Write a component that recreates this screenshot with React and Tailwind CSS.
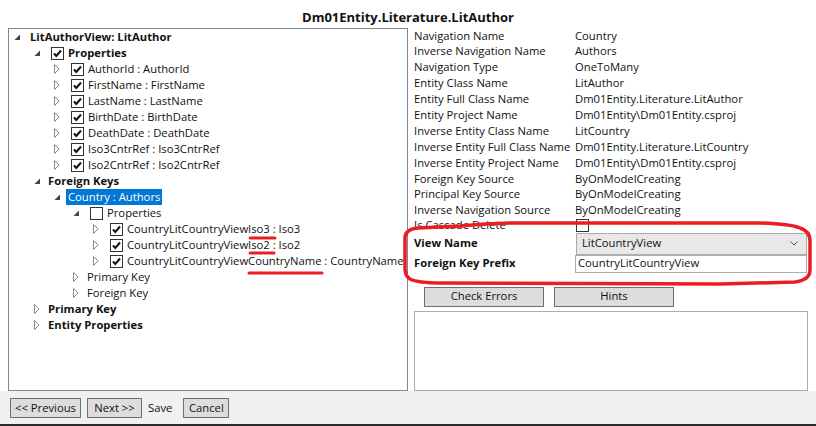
import React from 'react';

const FONT = { fontFamily: '"Open Sans", "Noto Sans", sans-serif' };

const PAD = ['pl-[3px]', 'pl-[23px]', 'pl-[43px]', 'pl-[62px]', 'pl-[82px]'];

const treeRows = [
  { level: 0, open: true, text: 'LitAuthorView: LitAuthor', bold: true },
  { level: 1, open: true, check: true, text: 'Properties', bold: true },
  { level: 2, check: true, text: 'AuthorId : AuthorId' },
  { level: 2, check: true, text: 'FirstName : FirstName' },
  { level: 2, check: true, text: 'LastName : LastName' },
  { level: 2, check: true, text: 'BirthDate : BirthDate' },
  { level: 2, check: true, text: 'DeathDate : DeathDate' },
  { level: 2, check: true, text: 'Iso3CntrRef : Iso3CntrRef' },
  { level: 2, check: true, text: 'Iso2CntrRef : Iso2CntrRef' },
  { level: 1, open: true, text: 'Foreign Keys', bold: true },
  { level: 2, open: true, text: 'Country : Authors', selected: true },
  { level: 3, open: true, check: false, text: 'Properties' },
  { level: 4, check: true, text: 'CountryLitCountryViewIso3 : Iso3' },
  { level: 4, check: true, text: 'CountryLitCountryViewIso2 : Iso2' },
  { level: 4, check: true, text: 'CountryLitCountryViewCountryName : CountryName' },
  { level: 3, text: 'Primary Key' },
  { level: 3, text: 'Foreign Key' },
  { level: 1, text: 'Primary Key', bold: true },
  { level: 1, text: 'Entity Properties', bold: true },
];

const props = [
  ['Navigation Name', 'Country'],
  ['Inverse Navigation Name', 'Authors'],
  ['Navigation Type', 'OneToMany'],
  ['Entity Class Name', 'LitAuthor'],
  ['Entity Full Class Name', 'Dm01Entity.Literature.LitAuthor'],
  ['Entity Project Name', 'Dm01Entity\\Dm01Entity.csproj'],
  ['Inverse Entity Class Name', 'LitCountry'],
  ['Inverse Entity Full Class Name', 'Dm01Entity.Literature.LitCountry'],
  ['Inverse Entity Project Name', 'Dm01Entity\\Dm01Entity.csproj'],
  ['Foreign Key Source', 'ByOnModelCreating'],
  ['Principal Key Source', 'ByOnModelCreating'],
  ['Inverse Navigation Source', 'ByOnModelCreating'],
];

function Expander({ open }) {
  return (
    <span className="w-[10px] h-[16px] flex items-center justify-center shrink-0">
      {open === true ? (
        <svg width="7" height="7" viewBox="0 0 7 7">
          <path d="M6 0.5 L6 6 L0.5 6 Z" fill="#454545" />
        </svg>
      ) : open === undefined ? (
        <svg width="6" height="10" viewBox="0 0 6 10">
          <path d="M0.5 0.5 L5 5 L0.5 9.5 Z" fill="none" stroke="#8a8a8a" strokeWidth="1" />
        </svg>
      ) : null}
    </span>
  );
}

function CheckBox({ checked }) {
  return (
    <span className="w-[13px] h-[13px] border border-[#333] bg-white flex items-center justify-center shrink-0">
      {checked && (
        <svg width="11" height="11" viewBox="0 0 11 11">
          <path d="M2 5.5 L4.3 8 L9 2.5" fill="none" stroke="#111" strokeWidth="2" />
        </svg>
      )}
    </span>
  );
}

function TreeRow({ row }) {
  const hasCheck = row.check !== undefined;
  return (
    <div className={`h-[16px] flex items-center whitespace-nowrap ${PAD[row.level]}`}>
      <Expander open={row.open} />
      {hasCheck && (
        <span className="ml-[9px]">
          <CheckBox checked={row.check} />
        </span>
      )}
      <span
        className={`${row.level === 0 ? 'ml-[8px]' : hasCheck ? 'ml-[4px]' : row.selected ? 'ml-[4px]' : 'ml-[6px]'} ${row.bold ? 'font-bold' : ''} ${row.selected ? 'bg-[#0078d7] text-white px-[2px] leading-[16px]' : 'text-[#111]'}`}
      >
        {row.text}
      </span>
    </div>
  );
}

function WinButton({ children, className = '' }) {
  return (
    <div className={`h-[20px] bg-[#dddddd] border border-[#707070] flex items-center justify-center text-[#111] ${className}`}>
      {children}
    </div>
  );
}

export default function App() {
  return (
    <div className="w-[816px] h-[426px] bg-white relative overflow-hidden flex flex-col text-[11.25px]" style={FONT}>
      <div className="h-[28px] pt-[8px] text-center font-bold text-[13px] leading-[18px] text-[#111]">
        Dm01Entity.Literature.LitAuthor
      </div>

      <div className="flex h-[363px]">
        <div className="ml-[8px] w-[400px] h-full border border-[#828790] overflow-hidden">
          {treeRows.map((r, i) => (
            <TreeRow key={i} row={r} />
          ))}
        </div>

        <div className="flex-1 pl-[6px] flex flex-col text-[#111]">
          {props.map(([k, v]) => (
            <div key={k} className="h-[15.9px] flex items-center whitespace-nowrap">
              <span className="w-[161px] shrink-0">{k}</span>
              <span>{v}</span>
            </div>
          ))}
          <div className="h-[14px] flex items-center whitespace-nowrap">
            <span className="w-[162px] shrink-0">Is Cascade Delete</span>
            <span className="w-[13px] h-[13px] border border-[#333] bg-white" />
          </div>
          <div className="h-[22px] flex items-center">
            <span className="w-[162px] shrink-0 font-bold">View Name</span>
            <div className="w-[231px] h-[22px] bg-[#e8e8e8] border border-[#acacac] flex items-center justify-between pl-[5px] pr-[8px]">
              <span>LitCountryView</span>
              <svg width="8" height="5" viewBox="0 0 8 5">
                <path d="M0.5 0.5 L4 4 L7.5 0.5" fill="none" stroke="#555" strokeWidth="1" />
              </svg>
            </div>
          </div>
          <div className="h-[18px] flex items-center">
            <span className="w-[161px] shrink-0 font-bold">Foreign Key Prefix</span>
            <div className="w-[232px] h-[18px] bg-white border border-[#abadb3] flex items-center pl-[2px]">
              CountryLitCountryView
            </div>
          </div>
          <div className="flex gap-[10px] ml-[10px] mt-[14px]">
            <WinButton className="w-[120px]">Check Errors</WinButton>
            <WinButton className="w-[120px]">Hints</WinButton>
          </div>
          <div className="mt-[4px] w-[394px] flex-1 border border-[#abadb3] bg-white" />
        </div>
      </div>

      <div className="flex-1 bg-[#f0f0f0] border-b-2 border-[#2b2b2b] flex items-start pt-[7px] pl-[10px] text-[#111]">
        <WinButton className="w-[71px]">&lt;&lt; Previous</WinButton>
        <WinButton className="w-[55px] ml-[6px]">Next &gt;&gt;</WinButton>
        <span className="ml-[6px] h-[20px] flex items-center">Save</span>
        <WinButton className="w-[46px] ml-[11px]">Cancel</WinButton>
      </div>

      <svg className="absolute inset-0 pointer-events-none" width="816" height="426" viewBox="0 0 816 426">
        <path
          d="M405 250 L405 237 Q406 229 418 228 L460 226 Q490 223 520 223 L760 223 Q790 224 800 228 Q810 231 810 241 L810 270 Q810 280 795 282 L720 284 L440 283 Q418 283 410 279 Q405 276 405 268 Z"
          fill="none"
          stroke="#ec1c24"
          strokeWidth="3.5"
        />
        <path d="M250 238 L275 238" stroke="#ec1c24" strokeWidth="3" strokeLinecap="round" />
        <path d="M250 253 L274 253" stroke="#ec1c24" strokeWidth="3" strokeLinecap="round" />
        <path d="M249 273 L322 273" stroke="#ec1c24" strokeWidth="3" strokeLinecap="round" />
      </svg>
    </div>
  );
}
